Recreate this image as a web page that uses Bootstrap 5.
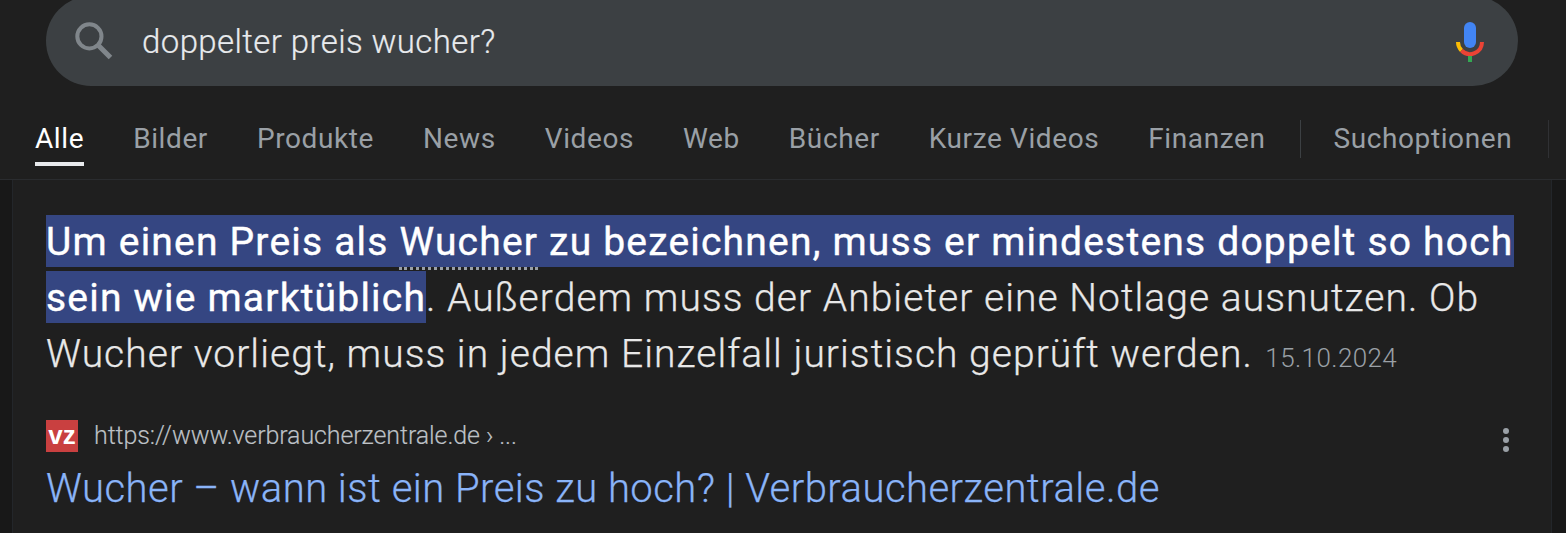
<!DOCTYPE html>
<html lang="de">

<head>
  <meta charset="UTF-8">
  <title>doppelter preis wucher?</title>
  <link href="https://cdn.jsdelivr.net/npm/bootstrap@5.3.0/dist/css/bootstrap.min.css" rel="stylesheet">
  <style>
    html, body { height: 533px; overflow: hidden; }
    body { background: #1f1f1f; font-family: Roboto, "Noto Sans", sans-serif; color: #e8e8e8; }
    .search-pill { height: 90px; margin: -4px 48px 0 46px; background: #3c4043; border-radius: 45px; padding: 0 34px 0 25px; }
    .search-text { font-size: 33px; letter-spacing: .4px; color: #e8eaed; margin: 2px 0 0 25px; font-weight: 300; -webkit-text-stroke: .2px #e8eaed; }
    .mic-icon { margin-top: 2px; }
    .tab-row { height: 94px; padding: 31px 0 0 35px; gap: 49px; border-bottom: 1px solid #2a2c2f; }
    .tab-link { font-size: 28px; letter-spacing: .6px; line-height: 44px; height: 49px; color: #9aa0a6; text-decoration: none; }
    .tab-link.is-on { color: #fff; border-bottom: 4px solid #e8eaed; }
    .tab-sep { width: 1px; height: 38px; background: #3c4043; margin: 3px -16px 0 -15px; }
    .tab-edge { width: 1px; height: 38px; background: #303134; margin: 3px 0 0 -13px; }
    .lower-area { background: #181818; height: 353px; }
    .answer-box { background: #1f1f1f; margin: 0 14px 0 12px; border-left: 1px solid #23262a; border-right: 1px solid #23262a; height: 353px; padding: 34px 20px 0 33px; }
    .answer-text { font-size: 39px; letter-spacing: 1.05px; line-height: 56px; margin: 0; color: #e8e8e8; font-weight: 300; -webkit-text-stroke: .25px #e8e8e8; }
    .hl-text { background: #354682; color: #fff; font-weight: 400; letter-spacing: 1.2px; padding: 4px 0 2px; -webkit-text-stroke: .4px #fff; }
    .term-dotted { border-bottom: 3px dotted #9aa0a6; padding-bottom: 2px; }
    .date-text { font-size: 26px; letter-spacing: .4px; color: #9aa0a6; margin-left: 2px; -webkit-text-stroke: 0; }
    .source-row { margin-top: 29px; height: 42px; }
    .fav-box { width: 32px; height: 32px; background: #c94040; color: #fff; font-weight: 700; font-size: 26px; line-height: 30px; text-align: center; margin-right: 16px; font-family: "Liberation Sans", sans-serif; }
    .source-url { font-size: 25px; letter-spacing: -.1px; color: #bdc1c6; font-weight: 300; -webkit-text-stroke: .15px #bdc1c6; }
    .more-dots { margin: 8px 21px 0 0; }
    .result-title { font-size: 40px; letter-spacing: .48px; line-height: 50px; color: #8ab4f8; text-decoration: none; display: block; margin-top: 7px; font-weight: 300; -webkit-text-stroke: .25px #8ab4f8; }
  </style>
</head>

<body>
  <div class="search-pill d-flex align-items-center">
    <svg width="46" height="46" viewBox="0 0 24 24" fill="none" stroke="#80868b" stroke-width="2.1">
      <circle cx="9.6" cy="9.6" r="6.3"/>
      <path d="M14.2 14.2 20.6 20.6" stroke-width="2.6"/>
    </svg>
    <span class="search-text flex-grow-1">doppelter preis wucher?</span>
    <svg class="mic-icon" width="28" height="40" viewBox="0 0 28 40" fill="none">
      <rect x="8" y="0" width="12" height="26" rx="6" fill="#4285f4"/>
      <path d="M2 20a12 12 0 0 0 3.500 8.500" stroke="#fbbc04" stroke-width="4"/>
      <path d="M5.500 28.500a12 12 0 0 0 20.500-8.500" stroke="#ea4335" stroke-width="4"/>
      <rect x="12" y="34" width="4" height="6" fill="#34a853"/>
    </svg>
  </div>

  <nav class="tab-row d-flex">
    <a class="tab-link is-on" href="#">Alle</a>
    <a class="tab-link" href="#">Bilder</a>
    <a class="tab-link" href="#">Produkte</a>
    <a class="tab-link" href="#">News</a>
    <a class="tab-link" href="#">Videos</a>
    <a class="tab-link" href="#">Web</a>
    <a class="tab-link" href="#">Bücher</a>
    <a class="tab-link" href="#">Kurze Videos</a>
    <a class="tab-link" href="#">Finanzen</a>
    <span class="tab-sep"></span>
    <a class="tab-link" href="#">Suchoptionen</a>
    <span class="tab-edge"></span>
  </nav>

  <div class="lower-area">
    <div class="answer-box">
      <p class="answer-text"><span class="hl-text">Um einen Preis als <span class="term-dotted">Wucher</span> zu bezeichnen, muss er mindestens doppelt so hoch sein wie marktüblich</span>. Außerdem muss der Anbieter eine Notlage ausnutzen. Ob Wucher vorliegt, muss in jedem Einzelfall juristisch geprüft werden. <span class="date-text">15.10.2024</span></p>
      <div class="source-row d-flex align-items-center">
        <div class="fav-box">vz</div>
        <span class="source-url flex-grow-1">https://www.verbraucherzentrale.de › ...</span>
        <svg class="more-dots" width="8" height="26" viewBox="0 0 8 26" fill="#9aa0a6"><circle cx="4" cy="4" r="3"/><circle cx="4" cy="13" r="3"/><circle cx="4" cy="22" r="3"/></svg>
      </div>
      <a class="result-title" href="#">Wucher – wann ist ein Preis zu hoch? | Verbraucherzentrale.de</a>
    </div>
  </div>
  <script src="https://cdn.jsdelivr.net/npm/bootstrap@5.3.0/dist/js/bootstrap.bundle.min.js"></script>
</body>
</html>
